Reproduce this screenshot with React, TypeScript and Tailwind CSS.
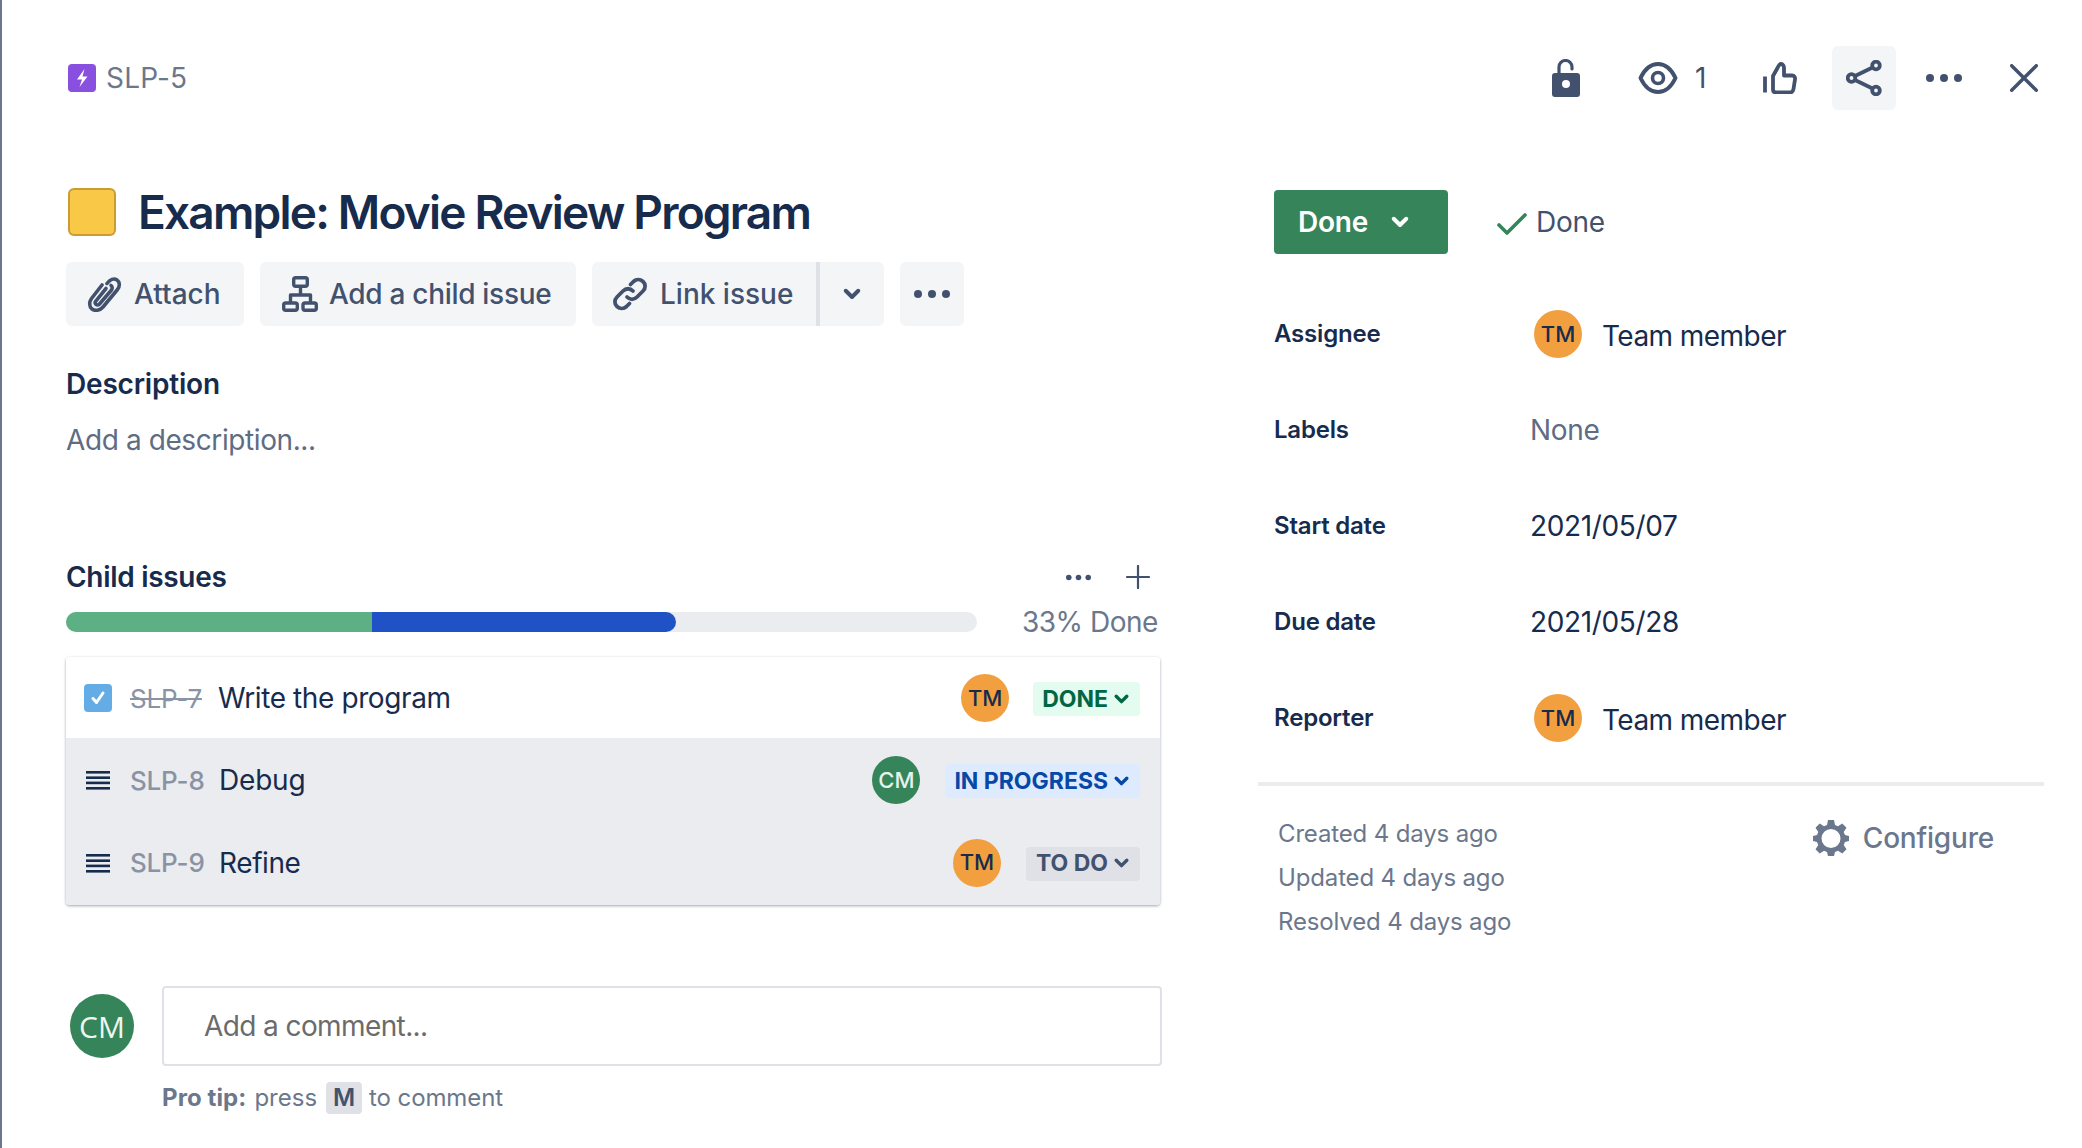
import React from "react";

const Chevron = ({ className = "" }: { className?: string }) => (
  <svg viewBox="0 0 16 12" className={className} fill="none" stroke="currentColor" strokeWidth="3.2" strokeLinecap="round" strokeLinejoin="round">
    <path d="M3 3l5 5 5-5" />
  </svg>
);

const Dots = ({ className = "" }: { className?: string }) => (
  <svg viewBox="0 0 36 10" className={className} fill="currentColor">
    <circle cx="4" cy="5" r="4" />
    <circle cx="18" cy="5" r="4" />
    <circle cx="32" cy="5" r="4" />
  </svg>
);

const Avatar = ({ t, green }: { t: string; green?: boolean }) => (
  <div className={`w-12 h-12 rounded-full flex items-center justify-center shrink-0 text-[22px] font-medium ${green ? "bg-[#36845a] text-[#e6f2ec]" : "bg-[#f29f3f] text-[#172b4d]"}`}>{t}</div>
);

const ListIcon = () => (
  <svg viewBox="0 0 24 20" className="w-6 h-5 text-[#172b4d] ml-[2px] mr-[20px] shrink-0" fill="currentColor">
    <rect x="0" y="1" width="24" height="2.6" />
    <rect x="0" y="6.4" width="24" height="2.6" />
    <rect x="0" y="11.6" width="24" height="2.6" />
    <rect x="0" y="17" width="24" height="2.6" />
  </svg>
);

const Badge = ({ label, cls }: { label: string; cls: string }) => (
  <div className={`h-[34px] mt-[2px] rounded-[4px] flex items-center pr-[10px] gap-[5px] text-[23px] font-bold leading-none ${cls}`}>
    {label}
    <Chevron className="w-[17px] h-[13px]" />
  </div>
);

const SideRow = ({ label, children }: { label: string; children: React.ReactNode }) => (
  <div className="flex items-center h-12 pl-[16px]">
    <div className="w-[256px] text-[24px] font-semibold text-[#172b4d] tracking-[-0.2px]">{label}</div>
    {children}
  </div>
);

const Person = () => (
  <div className="flex items-center gap-[20px] ml-[4px]">
    <Avatar t="TM" />
    <span className="text-[28px] text-[#172b4d] tracking-[-0.55px] mt-[4px]">Team member</span>
  </div>
);

const ActionButton = ({ children, cls }: { children: React.ReactNode; cls: string }) => (
  <div className={`h-16 bg-[#f4f5f7] rounded-[6px] flex items-center text-[28px] text-[#42526e] font-medium ${cls}`}>{children}</div>
);

export default function App() {
  return (
    <div className="w-[2082px] h-[1148px] bg-white border-l-2 border-[#6b778c] flex overflow-hidden font-['Inter',sans-serif]">
      <div className="w-[1160px] pl-[64px] shrink-0">
        <div className="flex items-center pt-[64px] pl-[2px] gap-[10px]">
          <svg viewBox="0 0 28 28" className="w-7 h-7 shrink-0">
            <rect width="28" height="28" rx="4" fill="#8950e0" />
            <path d="M16.500 5l-7.500 10.500H14L11.500 23 19.500 12.500h-5L16.500 5z" fill="#fff" />
          </svg>
          <span className="text-[28px] leading-7 text-[#6b778c] tracking-[0.2px]">SLP-5</span>
        </div>

        <div className="flex items-center gap-[22px] mt-[96px] h-12 pl-[2px]">
          <div className="w-12 h-12 rounded-[6px] bg-[#f8c846] border-2 border-[#c99d33] shrink-0"></div>
          <h1 className="text-[46px] font-semibold text-[#172b4d] tracking-[-1.8px] leading-none">Example: Movie Review Program</h1>
        </div>

        <div className="flex gap-4 mt-[26px]">
          <ActionButton cls="w-[178px] pl-[20px] gap-[12px]">
            <svg viewBox="0 0 36 36" className="w-9 h-9 shrink-0" fill="none" stroke="currentColor" strokeWidth="3.6" strokeLinecap="round" strokeLinejoin="round">
              <path d="M21 7.500c3-4 7-5.500 10-3.500s3 6 .5 9.500L17 31c-3 3.500-8 4.300-11 2s-3-7-.5-10.500L16 9" />
              <path d="M25 9.500c1.500 1 1.500 3 .5 4.500L13.500 28c-1 1.200-2.500 1.200-3.500.3s-1-2.300 0-3.500L20 12.500" />
            </svg>
            Attach
          </ActionButton>
          <ActionButton cls="w-[316px] pl-[22px] gap-[11px] tracking-[-0.3px]">
            <svg viewBox="0 0 36 36" className="w-9 h-9 shrink-0" fill="none" stroke="currentColor" strokeWidth="3.4" strokeLinejoin="round">
              <rect x="11.700" y="1.700" width="13.600" height="8.600" rx="2" />
              <path d="M18.500 10v9M8.500 27v-8h20v8" />
              <rect x="1.700" y="27" width="13.600" height="7.300" rx="2" />
              <rect x="21" y="27" width="13.300" height="7.300" rx="2" />
            </svg>
            Add a child issue
          </ActionButton>
          <div className="flex h-16">
            <ActionButton cls="w-[224px] pl-[20px] gap-[12px] rounded-r-none">
              <svg viewBox="0 0 36 36" className="w-9 h-9 shrink-0" fill="none" stroke="currentColor" strokeWidth="3.800" strokeLinecap="round">
                <path d="M15 21c3 3 7 3 10 0l6-6c2.800-2.800 2.800-7 0-9.500s-6.800-2.500-9.500 0l-3 3" />
                <path d="M21 15c-3-3-7-3-10 0l-6 6c-2.800 2.800-2.800 7 0 9.500s6.800 2.500 9.500 0l3-3" />
              </svg>
              Link issue
            </ActionButton>
            <div className="w-[4px] h-16 bg-[#dfe1e6]"></div>
            <div className="w-[64px] h-16 bg-[#f4f5f7] rounded-r-[6px] flex items-center justify-center text-[#42526e]">
              <Chevron className="w-[20px] h-[15px]" />
            </div>
          </div>
          <div className="w-16 h-16 bg-[#f4f5f7] rounded-[6px] flex items-center justify-center text-[#42526e]">
            <Dots className="w-[36px] h-[10px]" />
          </div>
        </div>

        <h2 className="mt-[42px] text-[28px] leading-8 font-semibold text-[#172b4d] tracking-[-0.2px]">Description</h2>
        <p className="mt-[24px] text-[28px] leading-8 text-[#5e6c84] tracking-[-0.4px]">Add a description...</p>

        <div className="mt-[105px] flex items-center h-8">
          <h2 className="text-[28px] leading-8 font-semibold text-[#172b4d] tracking-[-0.3px]">Child issues</h2>
          <Dots className="w-[25px] h-[7px] text-[#42526e] ml-auto" />
          <svg viewBox="0 0 24 24" className="w-6 h-6 ml-[35px] mr-[12px] text-[#42526e]" stroke="currentColor" strokeWidth="2.2" strokeLinecap="round">
            <path d="M12 1v22M1 12h22" />
          </svg>
        </div>

        <div className="mt-[19px] flex items-center h-5">
          <div className="w-[911px] h-5 rounded-full bg-[#ebecf0] overflow-hidden shrink-0 flex">
            <div className="w-[306px] bg-[#5db083]"></div>
            <div className="w-[304px] bg-[#2052c6] rounded-r-full"></div>
          </div>
          <span className="ml-[45px] text-[28px] text-[#6b778c] whitespace-nowrap tracking-[-0.5px]">33% Done</span>
        </div>

        <div className="mt-[25px] w-[1094px] rounded-[4px] overflow-hidden shadow-[0_1px_3px_rgba(9,30,66,0.4)] text-[28px] text-[#172b4d]">
          <div className="h-[81px] bg-white flex items-center pl-[18px] pr-[20px] pt-[1px]">
            <div className="w-7 h-7 rounded-[4px] bg-[#64ace6] flex items-center justify-center shrink-0">
              <svg viewBox="0 0 20 20" className="w-[20px] h-[20px]" fill="none" stroke="#fff" strokeWidth="3" strokeLinecap="round" strokeLinejoin="round"><path d="M5 10.500l3.500 4L15 5" /></svg>
            </div>
            <span className="ml-[18px] w-[88px] text-[#8993a4] line-through text-[26px] shrink-0 tracking-[-0.2px]">SLP-7</span>
            <span className="tracking-[-0.4px]">Write the program</span>
            <div className="ml-auto mr-[24px]"><Avatar t="TM" /></div>
            <Badge label="DONE" cls="pl-[9px] bg-[#e3fcef] text-[#006644]" />
          </div>
          <div className="h-[82px] bg-[#ebecf0] flex items-center pl-[18px] pr-[20px] pt-[2px]">
            <ListIcon />
            <span className="w-[89px] text-[#8993a4] text-[26px] font-medium shrink-0 tracking-[-0.2px]">SLP-8</span>
            <span className="tracking-[-0.2px]">Debug</span>
            <div className="ml-auto mr-[25px]"><Avatar t="CM" green /></div>
            <Badge label="IN PROGRESS" cls="pl-[9px] bg-[#deebff] text-[#0747a6]" />
          </div>
          <div className="h-[85px] bg-[#ebecf0] flex items-center pl-[18px] pr-[20px]">
            <ListIcon />
            <span className="w-[89px] text-[#8993a4] text-[26px] font-medium shrink-0 tracking-[-0.2px]">SLP-9</span>
            <span className="tracking-[-0.4px]">Refine</span>
            <div className="ml-auto mr-[25px]"><Avatar t="TM" /></div>
            <Badge label="TO DO" cls="pl-[10px] bg-[#dfe1e6] text-[#42526e]" />
          </div>
        </div>

        <div className="mt-[81px] flex w-[1096px]">
          <div className="w-16 h-16 rounded-full bg-[#36845a] text-[#eef6f1] text-[30px] flex items-center justify-center ml-[4px] mt-[8px] shrink-0 font-['Open_Sans',sans-serif]">CM</div>
          <div className="ml-[28px] flex-1 h-20 border-2 border-[#dfe1e6] rounded-[4px] flex items-center pl-[40px] text-[28px] text-[#6b6b6b] tracking-[-0.6px]">Add a comment...</div>
        </div>
        <div className="mt-[16px] ml-[96px] flex items-center h-8 text-[24px] text-[#6b778c]">
          <span className="font-bold tracking-[0.1px]">Pro tip:</span>
          <span className="ml-[8px]">press</span>
          <span className="ml-[9px] w-9 h-8 rounded-[4px] bg-[#dfe1e6] text-[#42526e] font-semibold flex items-center justify-center">M</span>
          <span className="ml-[7px] tracking-[-0.1px]">to comment</span>
        </div>
      </div>

      <div className="flex-1 pl-[96px] pr-[38px]">
        <div className="mt-[46px] h-16 flex items-center text-[#42526e]">
          <svg viewBox="0 0 28 38" className="w-7 h-[38px] ml-[294px] shrink-0" fill="currentColor">
            <path d="M7 15V8a6.500 6.500 0 0 1 13 0v2" fill="none" stroke="currentColor" strokeWidth="3.200" strokeLinecap="round" />
            <path fillRule="evenodd" d="M3 14h22a3 3 0 0 1 3 3v18a3 3 0 0 1-3 3H3a3 3 0 0 1-3-3V17a3 3 0 0 1 3-3zm11 7a4 4 0 1 0 0 8 4 4 0 0 0 0-8z" />
          </svg>
          <svg viewBox="0 0 40 32" className="w-10 h-8 ml-[58px] shrink-0" fill="none" stroke="currentColor" strokeWidth="4">
            <path d="M2.500 16C7 6.500 13 2 20 2s13 4.500 17.500 14C33 25.500 27 30 20 30S7 25.500 2.500 16z" strokeLinejoin="round" />
            <circle cx="20" cy="16" r="5.500" strokeWidth="3.600" />
          </svg>
          <span className="ml-[17px] w-[11px] text-[28px] leading-none font-normal">1</span>
          <svg viewBox="0 0 34 32" className="w-[34px] h-8 ml-[57px] shrink-0" fill="none" stroke="currentColor" strokeWidth="3.800" strokeLinejoin="round" strokeLinecap="round">
            <path d="M2 14.500v16" strokeLinecap="butt" />
            <path d="M10 14l4.500-8C15.500 4 16 2 18 2s3 2 3 4v7.500h8c2.500 0 3.300 2 3 4l-1.500 9.500c-.3 2-1.500 3.500-3.500 3.500H13c-2 0-3-1-3-3V14z" />
          </svg>
          <div className="w-16 h-16 ml-[35px] bg-[#f4f5f7] rounded-[6px] flex items-center justify-center shrink-0">
            <svg viewBox="0 0 36 36" className="w-9 h-9" fill="none" stroke="currentColor" strokeWidth="3.800">
              <circle cx="5.500" cy="18" r="3.800" />
              <circle cx="30" cy="5.500" r="3.800" />
              <circle cx="30" cy="30.500" r="3.800" />
              <path d="M9 16L26.500 7.500M9 20l17.500 8.500" />
            </svg>
          </div>
          <Dots className="w-9 h-[10px] ml-[30px] shrink-0" />
          <svg viewBox="0 0 28 28" className="w-7 h-7 ml-[48px] shrink-0" fill="none" stroke="currentColor" strokeWidth="3.400" strokeLinecap="round">
            <path d="M1.700 1.700l24.600 24.600M26.300 1.700L1.700 26.300" />
          </svg>
        </div>

        <div className="mt-[80px] ml-[16px] flex items-center h-16">
          <div className="w-[174px] h-16 rounded-[4px] bg-[#36845a] text-white text-[28px] font-semibold flex items-center pl-6 gap-[22px] tracking-[-0.2px]">
            Done
            <Chevron className="w-[20px] h-[15px]" />
          </div>
          <svg viewBox="0 0 30 22" className="w-[30px] h-[22px] ml-[49px] mt-[3px] text-[#36845a]" fill="none" stroke="currentColor" strokeWidth="3.600" strokeLinecap="round" strokeLinejoin="round">
            <path d="M2 12l8 8L28 2" />
          </svg>
          <span className="ml-[9px] text-[28px] text-[#42526e] tracking-[-0.25px]">Done</span>
        </div>

        <div className="mt-[56px] flex flex-col gap-12">
          <SideRow label="Assignee"><Person /></SideRow>
          <SideRow label="Labels"><span className="text-[28px] text-[#5e6c84] tracking-[-0.3px]">None</span></SideRow>
          <SideRow label="Start date"><span className="text-[28px] text-[#172b4d] tracking-[-0.35px]">2021/05/07</span></SideRow>
          <SideRow label="Due date"><span className="text-[28px] text-[#172b4d] tracking-[-0.35px]">2021/05/28</span></SideRow>
          <SideRow label="Reporter"><Person /></SideRow>
        </div>

        <div className="mt-[40px] h-1 bg-[#ebecf0]"></div>

        <div className="mt-[26px] pl-[20px] pr-[50px] flex justify-between items-start">
          <div className="text-[24px] leading-[44px] text-[#6b778c] tracking-[-0.15px]">
            <div>Created 4 days ago</div>
            <div>Updated 4 days ago</div>
            <div>Resolved 4 days ago</div>
          </div>
          <div className="flex items-center gap-[14px] mt-[5px] text-[28px] font-medium text-[#6b778c] tracking-[-0.2px]">
            <svg viewBox="0 0 36 36" className="w-9 h-9 shrink-0" fill="currentColor">
              <path fillRule="evenodd" d="M15 0h6l1 5 3 1.300 4.300-2.800 4.200 4.200L30.700 12l1.300 3 4 1v5l-4 1-1.300 3 2.800 4.300-4.200 4.200L25 30.700l-3 1.300-1 4h-6l-1-4-3-1.300-4.300 2.800-4.200-4.200L5.300 25 4 22l-4-1v-5l4-1 1.300-3-2.800-4.300 4.200-4.200L11 6.300 14 5l1-5zm3 9a9.500 9.500 0 1 0 0 19 9.500 9.500 0 0 0 0-19z" />
            </svg>
            Configure
          </div>
        </div>
      </div>
    </div>
  );
}
